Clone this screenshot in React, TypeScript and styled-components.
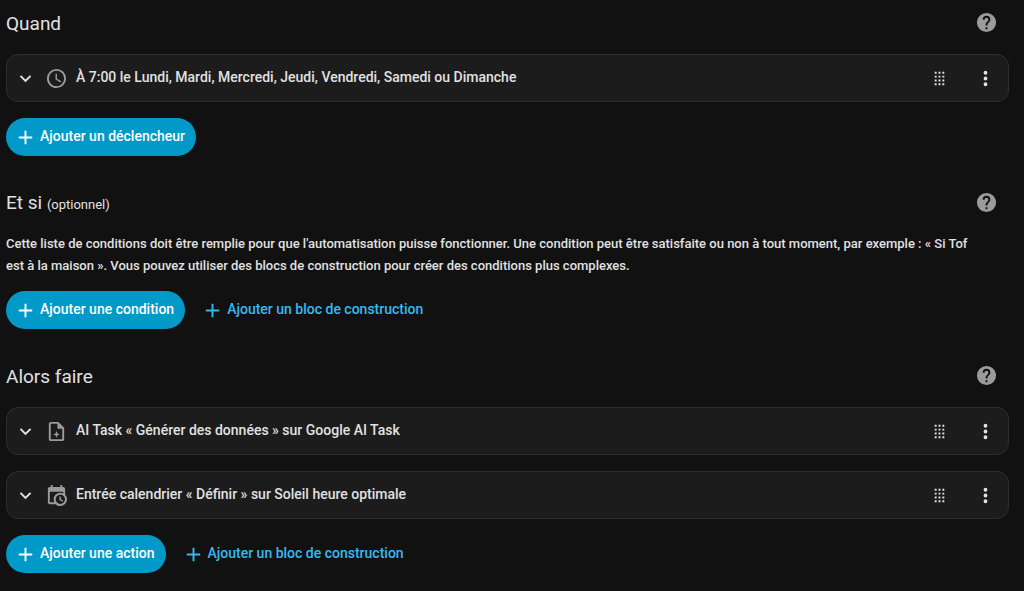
import React from "react";
import styled, { createGlobalStyle, css } from "styled-components";

const GlobalStyle = createGlobalStyle`
  * { box-sizing: border-box; }
  body {
    margin: 0;
    background: #111111;
    color: #e1e1e1;
    font-family: Roboto, "Noto Sans", sans-serif;
    font-size: 14px;
    line-height: 22px;
  }
`;

const Page = styled.main`
  display: flex;
  flex-direction: column;
  gap: 24px;
  padding: 0 15px 18px 6px;
`;

const Section = styled.section`
  display: flex;
  flex-direction: column;
`;

const SectionHeader = styled.header`
  display: flex;
  align-items: center;
  justify-content: space-between;
  height: 44px;
  padding-right: 11px;
`;

const Title = styled.h2`
  margin: 0;
  padding-top: 3px;
  font-size: 19px;
  font-weight: 400;
  line-height: 24px;
`;

const Optional = styled.small`
  font-size: 13px;
`;

const Description = styled.p`
  margin: 9px 0 14px;
  padding-right: 24px;
  font-size: 13px;
  font-weight: 500;
`;

const CardList = styled.div`
  display: flex;
  flex-direction: column;
  gap: 16px;
  margin: 10px 0 16px;
`;

const Card = styled.article`
  display: flex;
  align-items: center;
  gap: 8px;
  height: 48px;
  padding: 0 11px 0 7px;
  background: #1c1c1c;
  border: 1px solid #2e2e2e;
  border-radius: 12px;
`;

const CardTitle = styled.h3`
  flex: 1;
  margin: 0;
  padding-bottom: 3px;
  font-size: 14px;
  font-weight: 500;
`;

const CardTools = styled.div`
  display: flex;
  gap: 23px;
`;

const IconButton = styled.button<{ $muted?: boolean }>`
  display: flex;
  padding: 0;
  border: 0;
  background: none;
  color: ${(p) => (p.$muted ? "#9b9b9b" : "#e1e1e1")};
  cursor: pointer;
`;

const Actions = styled.div`
  display: flex;
  gap: 8px;
`;

const AddButton = styled.button<{ $primary?: boolean }>`
  display: flex;
  align-items: center;
  gap: 3px;
  height: 38px;
  padding: 0 11px 0 8px;
  border: 0;
  border-radius: 19px;
  background: none;
  color: #37b9f0;
  font: inherit;
  font-weight: 500;
  cursor: pointer;
  ${(p) =>
    p.$primary &&
    css`
      background: #0099c8;
      color: #ffffff;
    `}
`;

const AddLabel = styled.span`
  padding-bottom: 2px;
`;

const Svg = styled.svg<{ $muted?: boolean }>`
  display: block;
  flex: none;
  width: 23px;
  height: 23px;
  fill: ${(p) => (p.$muted ? "#9b9b9b" : "currentColor")};
`;

const icons = {
  chevron: "M7.41,8.58L12,13.17L16.59,8.58L18,10L12,16L6,10L7.41,8.58Z",
  clock:
    "M12,20A8,8 0 0,0 20,12A8,8 0 0,0 12,4A8,8 0 0,0 4,12A8,8 0 0,0 12,20M12,2A10,10 0 0,1 22,12A10,10 0 0,1 12,22C6.47,22 2,17.5 2,12A10,10 0 0,1 12,2M12.5,7V12.25L17,14.92L16.25,16.15L11,13V7H12.5Z",
  plus: "M19,13H13V19H11V13H5V11H11V5H13V11H19V13Z",
  help: "M15.07,11.25L14.17,12.17C13.45,12.89 13,13.5 13,15H11V14.5C11,13.39 11.45,12.39 12.17,11.67L13.41,10.41C13.78,10.05 14,9.55 14,9C14,7.89 13.1,7 12,7A2,2 0 0,0 10,9H8A4,4 0 0,1 12,5A4,4 0 0,1 16,9C16,9.88 15.64,10.67 15.07,11.25M13,19H11V17H13M12,2A10,10 0 0,0 2,12A10,10 0 0,0 12,22A10,10 0 0,0 22,12C22,6.47 17.5,2 12,2Z",
  dots: "M12,16A2,2 0 0,1 14,18A2,2 0 0,1 12,20A2,2 0 0,1 10,18A2,2 0 0,1 12,16M12,10A2,2 0 0,1 14,12A2,2 0 0,1 12,14A2,2 0 0,1 10,12A2,2 0 0,1 12,10M12,4A2,2 0 0,1 14,6A2,2 0 0,1 12,8A2,2 0 0,1 10,6A2,2 0 0,1 12,4Z",
  drag: [7, 11, 15]
    .flatMap((x) => [5, 9, 13, 17].map((y) => `M${x},${y}h2v2h-2Z`))
    .join(""),
  file: "M14,2H6C4.89,2 4,2.9 4,4V20C4,21.11 4.89,22 6,22H18C19.11,22 20,21.11 20,20V8L14,2M18,20H6V4H13V9H18V20M12,11.5L13,14L15.5,15L13,16L12,18.5L11,16L8.5,15L11,14Z",
  calendar:
    "M15,13H16.5V15.82L18.94,17.23L18.19,18.53L15,16.69V13M19,8H5V19H9.67C9.24,18.09 9,17.07 9,16A7,7 0 0,1 16,9C17.07,9 18.09,9.24 19,9.67V8M5,21C3.89,21 3,20.1 3,19V5C3,3.89 3.89,3 5,3H6V1H8V3H16V1H18V3H19A2,2 0 0,1 21,5V11.1C22.24,12.36 23,14.09 23,16A7,7 0 0,1 16,23C14.09,23 12.36,22.24 11.1,21H5M16,11.15A4.85,4.85 0 0,0 11.15,16C11.15,18.68 13.32,20.85 16,20.85A4.85,4.85 0 0,0 20.85,16C20.85,13.32 18.68,11.15 16,11.15Z",
};

type IconName = keyof typeof icons;

function Icon({ name, muted }: { name: IconName; muted?: boolean }) {
  return (
    <Svg viewBox="0 0 24 24" aria-hidden="true" $muted={muted}>
      <path d={icons[name]} />
    </Svg>
  );
}

function Header({ children }: { children: React.ReactNode }) {
  return (
    <SectionHeader>
      <Title>{children}</Title>
      <IconButton type="button" aria-label="Aide" $muted>
        <Icon name="help" />
      </IconButton>
    </SectionHeader>
  );
}

function Row({ icon, title }: { icon: IconName; title: string }) {
  return (
    <Card>
      <IconButton type="button" aria-label="Développer" aria-expanded={false}>
        <Icon name="chevron" />
      </IconButton>
      <Icon name={icon} muted />
      <CardTitle>{title}</CardTitle>
      <CardTools>
        <IconButton type="button" aria-label="Déplacer">
          <Icon name="drag" />
        </IconButton>
        <IconButton type="button" aria-label="Menu">
          <Icon name="dots" />
        </IconButton>
      </CardTools>
    </Card>
  );
}

function Add({ label, primary }: { label: string; primary?: boolean }) {
  return (
    <AddButton type="button" $primary={primary}>
      <Icon name="plus" />
      <AddLabel>{label}</AddLabel>
    </AddButton>
  );
}

export default function App() {
  return (
    <>
      <GlobalStyle />
      <Page>
        <Section>
          <Header>Quand</Header>
          <CardList>
            <Row
              icon="clock"
              title="À 7:00 le Lundi, Mardi, Mercredi, Jeudi, Vendredi, Samedi ou Dimanche"
            />
          </CardList>
          <Actions>
            <Add label="Ajouter un déclencheur" primary />
          </Actions>
        </Section>

        <Section>
          <Header>
            Et si <Optional>(optionnel)</Optional>
          </Header>
          <Description>
            Cette liste de conditions doit être remplie pour que l'automatisation puisse
            fonctionner. Une condition peut être satisfaite ou non à tout moment, par
            exemple : « Si Tof est à la maison ». Vous pouvez utiliser des blocs de
            construction pour créer des conditions plus complexes.
          </Description>
          <Actions>
            <Add label="Ajouter une condition" primary />
            <Add label="Ajouter un bloc de construction" />
          </Actions>
        </Section>

        <Section>
          <Header>Alors faire</Header>
          <CardList>
            <Row icon="file" title="AI Task « Générer des données » sur Google AI Task" />
            <Row
              icon="calendar"
              title="Entrée calendrier « Définir » sur Soleil heure optimale"
            />
          </CardList>
          <Actions>
            <Add label="Ajouter une action" primary />
            <Add label="Ajouter un bloc de construction" />
          </Actions>
        </Section>
      </Page>
    </>
  );
}
